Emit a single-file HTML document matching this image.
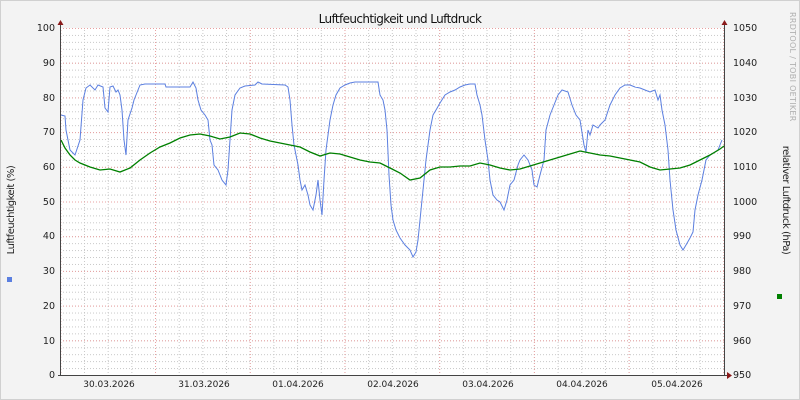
<!DOCTYPE html>
<html><head><meta charset="utf-8"><style>
body{margin:0;background:#f3f3f3;}
svg{display:block;font-family:"DejaVu Sans","Liberation Sans",sans-serif;}
</style></head><body>
<svg width="800" height="400" viewBox="0 0 800 400" xmlns="http://www.w3.org/2000/svg">
<defs>
<pattern id="hmin" x="0" y="28" width="800" height="6.94" patternUnits="userSpaceOnUse"><line x1="0" y1="0.5" x2="800" y2="0.5" stroke="#c8c8c8" stroke-width="1" stroke-dasharray="1,2"/></pattern>
<pattern id="vmin" x="60.3" y="0" width="23.68" height="400" patternUnits="userSpaceOnUse"><line x1="0.5" y1="0" x2="0.5" y2="400" stroke="#c8c8c8" stroke-width="1" stroke-dasharray="1,2"/></pattern>
<pattern id="hmaj" x="0" y="28" width="800" height="34.7" patternUnits="userSpaceOnUse"><line x1="0" y1="0.5" x2="800" y2="0.5" stroke="#e8a0a0" stroke-width="1" stroke-dasharray="1,2"/></pattern>
<pattern id="vmaj" x="60.3" y="0" width="94.72" height="400" patternUnits="userSpaceOnUse"><line x1="0.5" y1="0" x2="0.5" y2="400" stroke="#e8a0a0" stroke-width="1" stroke-dasharray="1,2"/></pattern>
</defs>
<rect x="0.5" y="0.5" width="799" height="399" fill="#f3f3f3" stroke="#d0d0d0"/>
<rect x="61" y="28" width="663" height="347" fill="#fff"/>
<rect x="61" y="28" width="663" height="347" fill="url(#hmin)"/>
<rect x="61" y="28" width="663" height="347" fill="url(#vmin)"/>
<rect x="61" y="28" width="663" height="347" fill="url(#hmaj)"/>
<rect x="61" y="28" width="663" height="347" fill="url(#vmaj)"/>
<polyline fill="none" stroke="#5b7fe0" stroke-width="1" points="61,115 65,116 66,130 70,150 75,155 80,140 83,100 86,88 90,85 95,90 98,85 103,87 105,108 108,112 110,87 113,86 116,92 118,90 120,95 122,110 124,140 126,155 128,120 132,108 134,100 136,95 140,85 145,84 165,84 166,87 190,87 193,82 196,88 198,100 201,110 205,115 208,120 210,140 212,145 214,165 218,170 222,180 226,185 228,170 230,140 232,110 235,95 240,88 245,86 255,85 258,82 262,84 285,85 288,87 290,100 292,125 294,145 296,155 298,165 300,180 302,190 305,185 308,195 310,205 313,210 316,195 318,180 320,200 322,215 324,180 326,150 330,120 333,105 336,95 340,88 345,85 350,83 355,82 378,82 380,95 383,100 385,110 387,130 389,175 391,205 393,220 396,230 400,238 405,245 410,250 413,257 416,252 418,240 420,220 423,190 426,160 430,130 433,115 436,110 440,103 445,95 450,92 455,90 460,87 465,85 470,84 475,84 477,95 480,105 482,115 485,140 488,160 490,180 493,195 497,200 500,202 504,210 507,200 510,185 514,180 518,165 520,160 524,155 528,160 532,170 534,185 537,187 540,175 544,160 546,130 550,115 554,105 558,95 562,90 568,92 572,105 576,115 580,120 584,145 586,152 588,130 590,135 593,125 598,128 600,125 605,120 610,105 615,95 620,88 625,85 630,85 635,87 640,88 645,90 650,92 655,90 658,100 660,95 662,110 665,125 668,150 670,180 673,210 676,230 680,245 683,250 686,245 690,238 693,232 695,210 698,195 702,180 706,160 710,155 715,152 718,150 720,145 722,140"/>
<polyline fill="none" stroke="#008000" stroke-width="1.3" points="61,140 65,148 70,155 75,160 80,163 90,167 100,170 110,169 120,172 130,168 140,160 150,153 160,147 170,143 180,138 190,135 200,134 210,136 220,139 230,137 240,133 250,134 260,138 270,141 280,143 290,145 300,147 310,152 320,156 330,153 340,154 350,157 360,160 370,162 380,163 390,168 400,173 410,180 420,178 430,170 440,167 450,167 460,166 470,166 480,163 490,165 500,168 510,170 520,169 530,166 540,163 550,160 560,157 570,154 580,151 590,153 600,155 610,156 620,158 630,160 640,162 650,167 660,170 670,169 680,168 690,165 700,160 710,155 720,149 724,146"/>
<line x1="60.5" y1="24" x2="60.5" y2="375" stroke="#444"/>
<line x1="724.5" y1="24" x2="724.5" y2="375" stroke="#444"/>
<line x1="58" y1="375.5" x2="728" y2="375.5" stroke="#444"/>
<polygon points="57.5,25 63.5,25 60.5,20" fill="#8b1a1a"/>
<polygon points="721.5,25 727.5,25 724.5,20" fill="#8b1a1a"/>
<polygon points="727,372 727,379 732,375.5" fill="#8b1a1a"/>
<g font-size="9.5" fill="#222" text-anchor="end">
<text x="55" y="31">100</text><text x="55" y="66">90</text><text x="55" y="101">80</text><text x="55" y="135">70</text><text x="55" y="170">60</text><text x="55" y="205">50</text><text x="55" y="239">40</text><text x="55" y="274">30</text><text x="55" y="309">20</text><text x="55" y="344">10</text><text x="55" y="378">0</text>
</g>
<g font-size="9.5" fill="#222">
<text x="733" y="31">1050</text><text x="733" y="66">1040</text><text x="733" y="101">1030</text><text x="733" y="135">1020</text><text x="733" y="170">1010</text><text x="733" y="205">1000</text><text x="733" y="239">990</text><text x="733" y="274">980</text><text x="733" y="309">970</text><text x="733" y="344">960</text><text x="733" y="378">950</text>
</g>
<g font-size="9" fill="#222" text-anchor="middle">
<text x="109" y="387">30.03.2026</text><text x="204" y="387">31.03.2026</text><text x="298" y="387">01.04.2026</text><text x="393" y="387">02.04.2026</text><text x="488" y="387">03.04.2026</text><text x="582" y="387">04.04.2026</text><text x="677" y="387">05.04.2026</text>
</g>
<text x="400" y="23" font-size="12" fill="#111" text-anchor="middle" letter-spacing="-0.6">Luftfeuchtigkeit und Luftdruck</text>
<text transform="translate(14,210) rotate(-90)" font-size="10" fill="#222" text-anchor="middle" letter-spacing="-0.5">Luftfeuchtigkeit (%)</text>
<text transform="translate(783,200) rotate(90)" font-size="10" fill="#222" text-anchor="middle" letter-spacing="-0.5">relativer Luftdruck (hPa)</text>
<text transform="translate(790,12) rotate(90)" font-size="8" fill="#b0b0b0" letter-spacing="0.3">RRDTOOL / TOBI OETIKER</text>
<rect x="7" y="277" width="5" height="5" fill="#5b7fe0"/>
<rect x="777" y="294" width="5" height="5" fill="#008000"/>
</svg>
</body></html>
